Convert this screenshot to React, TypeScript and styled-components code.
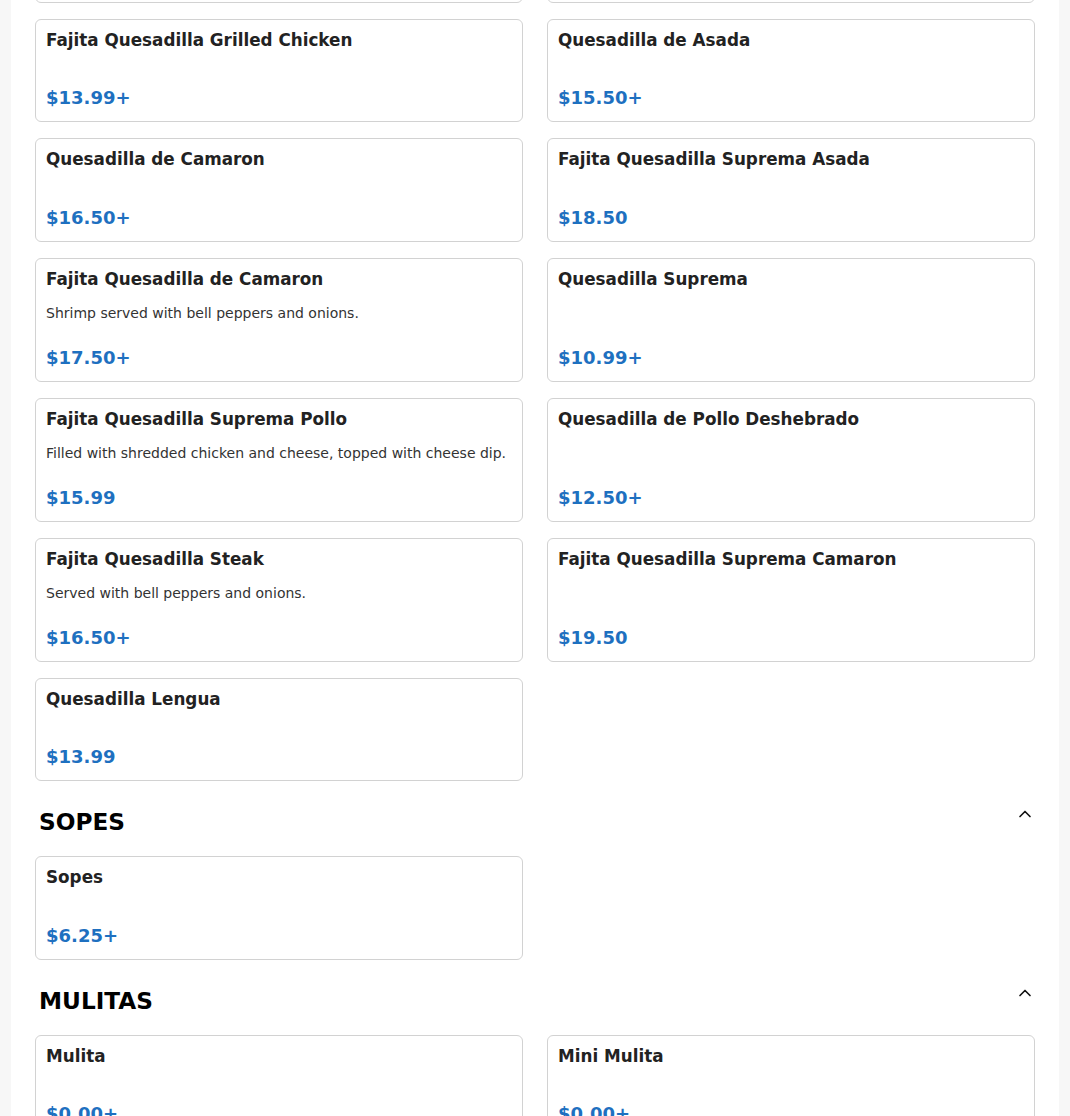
import React from 'react';
import styled, { createGlobalStyle } from 'styled-components';

const GlobalStyle = createGlobalStyle`
	html, body {
		margin: 0;
		padding: 0;
		background: #f7f7f7;
		overflow: hidden;
	}
	body {
		font-family: 'DejaVu Sans', Verdana, sans-serif;
		color: #222;
	}
`;

const Page = styled.main`
	width: 1048px;
	margin: -100px auto 0;
	padding: 0 24px 40px;
	box-sizing: border-box;
	background: #fff;
`;

const Section = styled.section`
	& + & {
		margin-top: 23px;
	}
`;

const SectionHeader = styled.div`
	display: flex;
	justify-content: space-between;
	align-items: flex-start;
	padding-left: 4px;
	margin-bottom: 16px;
`;

const SectionTitle = styled.h2`
	margin: 0;
	font-size: 23.2px;
	line-height: 36px;
	font-weight: 700;
	color: #000;
`;

const Toggle = styled.button`
	display: flex;
	border: 0;
	padding: 0;
	margin-top: 0;
	background: none;
	color: #111;
	cursor: pointer;
`;

const Grid = styled.div`
	display: grid;
	grid-template-columns: 1fr 1fr;
	gap: 16px 24px;
`;

const Card = styled.div`
	display: flex;
	flex-direction: column;
	padding: 10px;
	border: 1px solid #d2d2d2;
	border-radius: 6px;
	background: #fff;
`;

const ItemName = styled.div`
	font-size: 16.8px;
	line-height: 20.2px;
	font-weight: 700;
	color: #222;
	margin-bottom: 14px;
`;

const ItemDesc = styled.div`
	font-size: 14px;
	line-height: 21px;
	color: #333;
`;

const Price = styled.div`
	margin-top: auto;
	padding-top: 20px;
	font-size: 18px;
	line-height: 27px;
	font-weight: 700;
	color: #1e70c0;
`;

type Item = { name: string; price: string; desc?: string };

const sections: { title: string | null; items: Item[] }[] = [
	{
		title: null,
		items: [
			{ name: 'Quesadilla de Pollo', price: '$12.99+' },
			{ name: 'Quesadilla de Queso', price: '$9.99+' },
			{ name: 'Fajita Quesadilla Grilled Chicken', price: '$13.99+' },
			{ name: 'Quesadilla de Asada', price: '$15.50+' },
			{ name: 'Quesadilla de Camaron', price: '$16.50+' },
			{ name: 'Fajita Quesadilla Suprema Asada', price: '$18.50' },
			{ name: 'Fajita Quesadilla de Camaron', price: '$17.50+', desc: 'Shrimp served with bell peppers and onions.' },
			{ name: 'Quesadilla Suprema', price: '$10.99+' },
			{
				name: 'Fajita Quesadilla Suprema Pollo',
				price: '$15.99',
				desc: 'Filled with shredded chicken and cheese, topped with cheese dip.',
			},
			{ name: 'Quesadilla de Pollo Deshebrado', price: '$12.50+' },
			{ name: 'Fajita Quesadilla Steak', price: '$16.50+', desc: 'Served with bell peppers and onions.' },
			{ name: 'Fajita Quesadilla Suprema Camaron', price: '$19.50' },
			{ name: 'Quesadilla Lengua', price: '$13.99' },
		],
	},
	{ title: 'SOPES', items: [{ name: 'Sopes', price: '$6.25+' }] },
	{
		title: 'MULITAS',
		items: [
			{ name: 'Mulita', price: '$0.00+' },
			{ name: 'Mini Mulita', price: '$0.00+' },
		],
	},
];

const ChevronUp = () => (
	<svg width="20" height="20" viewBox="0 0 24 24" fill="none" stroke="currentColor" strokeWidth="2" strokeLinecap="round" strokeLinejoin="round">
		<path d="m18 15-6-6-6 6" />
	</svg>
);

const App = () => {
	return (
		<>
			<GlobalStyle />
			<Page>
				{sections.map((section, i) => (
					<Section key={i}>
						{section.title && (
							<SectionHeader>
								<SectionTitle>{section.title}</SectionTitle>
								<Toggle aria-label="Collapse section">
									<ChevronUp />
								</Toggle>
							</SectionHeader>
						)}
						<Grid>
							{section.items.map((item) => (
								<Card key={item.name}>
									<ItemName>{item.name}</ItemName>
									{item.desc && <ItemDesc>{item.desc}</ItemDesc>}
									<Price>{item.price}</Price>
								</Card>
							))}
						</Grid>
					</Section>
				))}
			</Page>
		</>
	);
};

export default App;
